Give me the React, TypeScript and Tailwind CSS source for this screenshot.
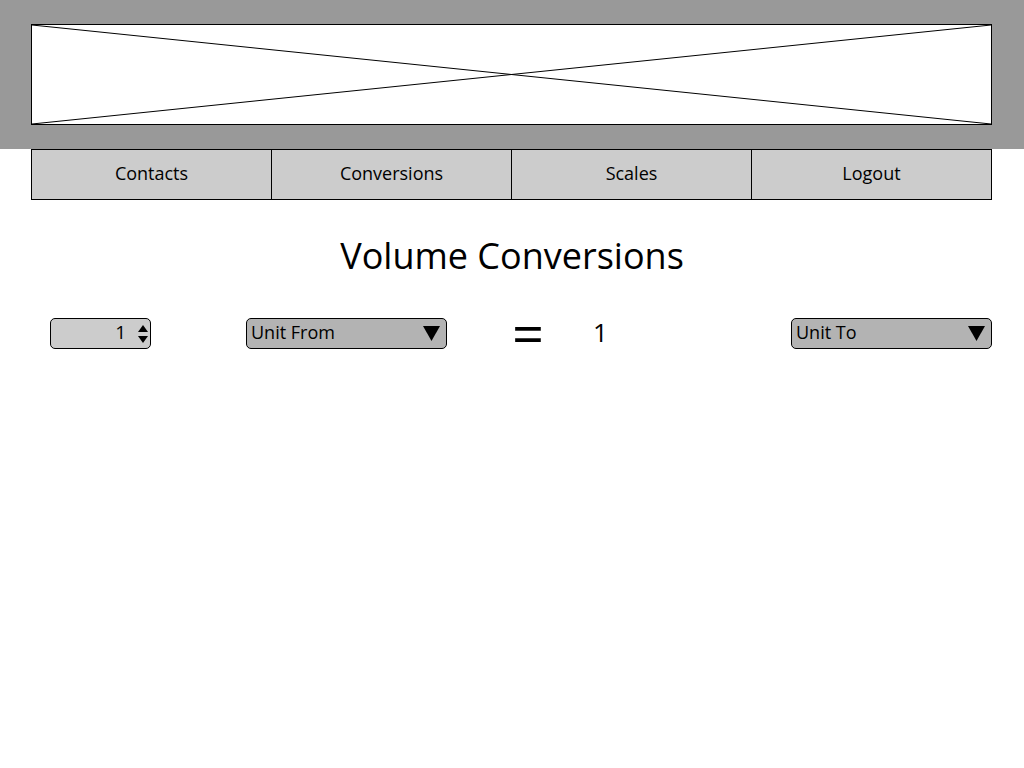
import React from "react";

const font = { fontFamily: '"Open Sans", "Noto Sans", sans-serif' };

function Caret({ className }: { className?: string }) {
  return (
    <svg className={className} width="17" height="15" viewBox="0 0 17 15">
      <polygon points="0,0 17,0 8.5,15" fill="#000" />
    </svg>
  );
}

export default function App() {
  const navItems = ["Contacts", "Conversions", "Scales", "Logout"];
  return (
    <div className="w-[1024px] h-[768px] bg-white text-black overflow-hidden" style={font}>
      <div className="h-[149px] bg-[#999999] pt-[24px] pl-[31px]">
        <div className="relative w-[961px] h-[101px] border border-black bg-white">
          <svg className="absolute inset-0" width="959" height="99" viewBox="0 0 959 99" preserveAspectRatio="none">
            <line x1="0" y1="0" x2="959" y2="99" stroke="#000" strokeWidth="1" />
            <line x1="0" y1="99" x2="959" y2="0" stroke="#000" strokeWidth="1" />
          </svg>
        </div>
      </div>
      <div className="ml-[31px] flex w-[961px] h-[51px] border-y border-black bg-[#cccccc]">
        {navItems.map((n, i) => (
          <div
            key={n}
            className={`flex items-center justify-center w-[240px] border-l border-black text-[18px] pb-[2px] ${i === 3 ? "border-r w-[241px]" : ""}`}
          >
            {n}
          </div>
        ))}
      </div>
      <h1 className="mt-[32px] text-center text-[36px] leading-[48px]">Volume Conversions</h1>
      <div className="mt-[38px] flex items-center h-[31px]">
        <div className="ml-[50px] w-[101px] h-[31px] rounded-[5px] border border-black bg-[#cccccc] flex items-center justify-end pr-[2px]">
          <span className="text-[19px] leading-none mr-[12px] mb-[2px]">1</span>
          <svg width="10" height="18" viewBox="0 0 10 18">
            <polygon points="5,0 10,7 0,7" fill="#000" />
            <polygon points="0,11 10,11 5,18" fill="#000" />
          </svg>
        </div>
        <div className="ml-[95px] w-[201px] h-[31px] rounded-[5px] border border-black bg-[#b3b3b3] flex items-center justify-between pl-[4px] pr-[6px]">
          <span className="text-[18px] leading-none mb-[3px]">Unit From</span>
          <Caret />
        </div>
        <div className="ml-[61px] w-[40px] text-center text-[56px] leading-none font-normal mb-[4px]">=</div>
        <div className="ml-[45px] text-[26px] leading-none mb-[3px]">1</div>
        <div className="ml-auto mr-[32px] w-[201px] h-[31px] rounded-[5px] border border-black bg-[#b3b3b3] flex items-center justify-between pl-[4px] pr-[6px]">
          <span className="text-[18px] leading-none mb-[3px]">Unit To</span>
          <Caret />
        </div>
      </div>
    </div>
  );
}
